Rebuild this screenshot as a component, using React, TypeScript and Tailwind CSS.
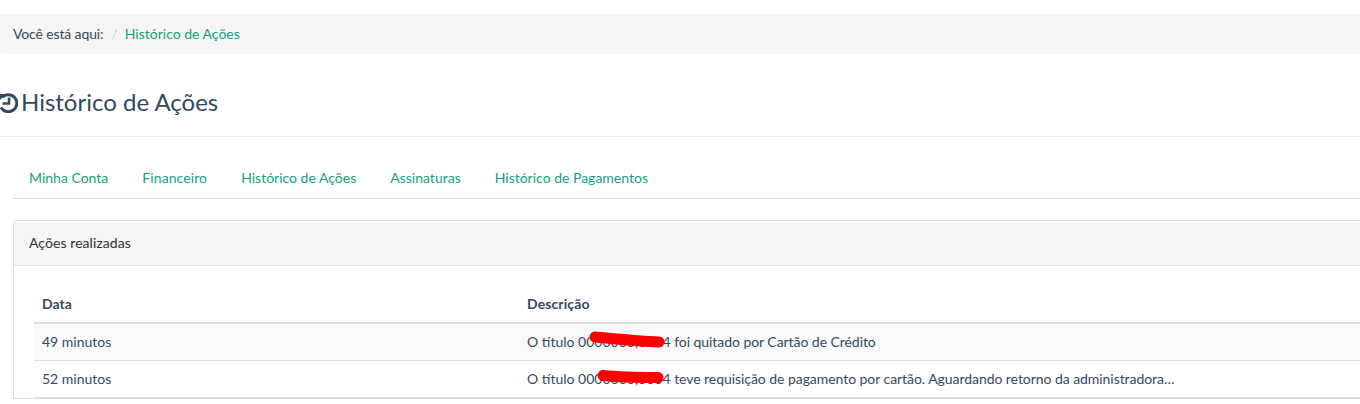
const tabs = ['Minha Conta', 'Financeiro', 'Histórico de Ações', 'Assinaturas', 'Histórico de Pagamentos'];

const HistoryIcon = () => (
  <svg className="ml-[-2px] mr-[5px] h-[22px] w-[20px] shrink-0" viewBox="0 0 20 22" fill="none">
    <path d="M4 6.5 A8.5 8.5 0 1 1 3 16.5" stroke="currentColor" strokeWidth="3" />
    <path d="M0.5 3 L7.5 3 L1 10 Z" fill="currentColor" />
    <path d="M11 6.5 V12.5 H4.5" stroke="currentColor" strokeWidth="2.6" />
  </svg>
);

const Scribble = ({ d }: { d: string }) => (
  <svg className="absolute left-[61px] top-0 h-[21px] w-[80px] overflow-visible" viewBox="0 0 80 21" fill="none">
    <path d={d} stroke="#ff0000" strokeWidth="11" strokeLinecap="round" />
  </svg>
);

export default function App() {
  return (
    <div className="h-[404px] w-[1360px] overflow-hidden bg-white font-['Lato','Open_Sans',sans-serif] text-[14px] text-[#34495e]">
      <div className="w-[1400px] pt-[14px]">
        <nav className="flex h-[40px] items-center rounded-l-[4px] bg-[#f5f5f5] pb-[1px] pl-[13px]">
          <span className="tracking-[-0.13px]">Você está aqui:</span>
          <span className="ml-[8px] text-[#ccc]">/</span>
          <a className="ml-[7px] text-[#16a085]">Histórico de Ações</a>
        </nav>

        <div className="flex h-[83px] items-center border-b border-[#eee] pt-[13px]">
          <h1 className="flex items-center text-[24px] leading-[26px]">
            <HistoryIcon />
            <span className="ml-[-2px]">Histórico de Ações</span>
          </h1>
        </div>

        <div className="ml-[13px]">
          <ul className="mt-[20px] flex h-[42px] items-center border-b border-[#ddd] pl-[16px]">
            {tabs.map((tab, i) => (
              <li key={tab} className={i === 1 ? 'mr-[34px] text-[#16a085] tracking-[0.1px]' : 'mr-[34px] text-[#16a085]'}>
                {tab}
              </li>
            ))}
          </ul>

          <section className="mt-[21px] rounded-t-[4px] border border-[#ddd]">
            <div className="flex h-[45px] items-center border-b border-[#ddd] bg-[#f5f5f5] pb-[1px] pl-[15px] text-[#333] tracking-[0.07px]">
              Ações realizadas
            </div>
            <div className="pl-[20px] pr-[19px] pt-[19px]">
              <div className="flex h-[39px] items-center border-b-2 border-[#ddd] pl-[8px] font-bold">
                <span className="w-[485px]">Data</span>
                <span className="tracking-[0.1px]">Descrição</span>
              </div>
              <div className="flex h-[37px] items-center border-b border-[#ddd] bg-[#f9f9f9] pb-[1px] pl-[8px]">
                <span className="w-[485px]">49 minutos</span>
                <span className="relative">
                  O título 0000000,0004 <span className="tracking-[-0.055px]">foi quitado por Cartão de Crédito</span>
                  <Scribble d="M7 6 C 30 8, 50 10, 71 11" />
                </span>
              </div>
              <div className="flex h-[37px] items-center border-b border-[#ddd] pb-[1px] pl-[8px]">
                <span className="w-[485px]">52 minutos</span>
                <span className="relative">
                  O título 0000000,0004 <span className="tracking-[-0.055px]">teve requisição de pagamento por cartão. Aguardando retorno da administradora…</span>
                  <Scribble d="M15 7.5 C 30 9, 50 9.5, 70 9.5" />
                </span>
              </div>
            </div>
          </section>
        </div>
      </div>
    </div>
  );
}
